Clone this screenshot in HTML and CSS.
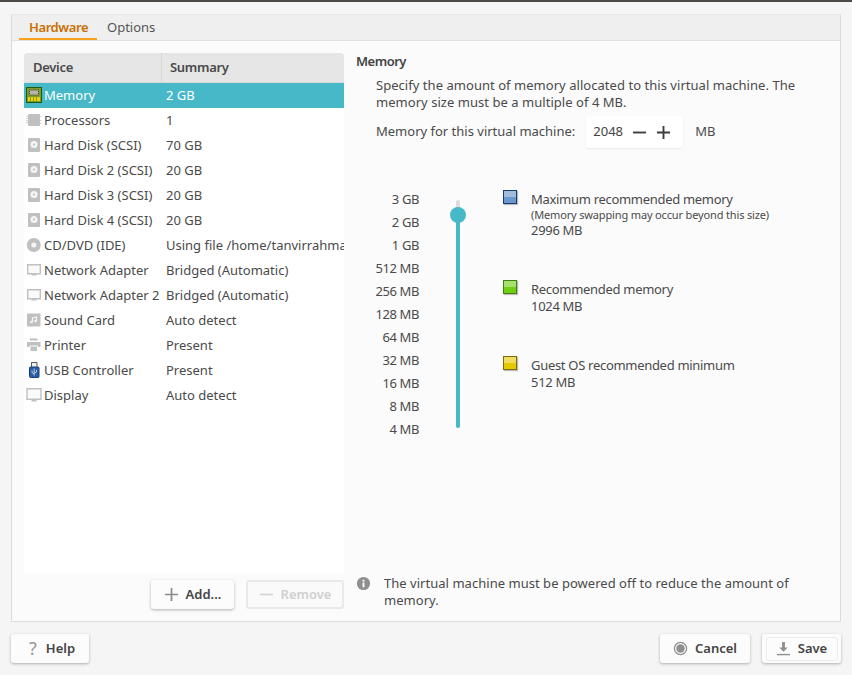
FILE: index.html
```html
<!DOCTYPE html>
<html lang="en">
<head>
    <meta charset="UTF-8">
    <title>Virtual Machine Settings</title>
    <link rel="stylesheet" href="styles.css">
</head>
<body>
    <div class="dialog">
        <div class="panel">
            <div class="tabs">
                <div class="tab tab-active">Hardware</div>
                <div class="tab">Options</div>
            </div>
            <div class="panel-body">
                <div class="devices">
                    <div class="device-list">
                        <div class="device-head">
                            <div class="col-device">Device</div>
                            <div class="col-summary">Summary</div>
                        </div>
                        <div class="device-row selected">
                            <svg class="icon" viewBox="0 0 16 16"><rect x=".5" y=".5" width="15" height="15" fill="#7f9a2a" stroke="#1e5c10"/><rect x="3.5" y="3" width="9" height="5" fill="#b5b5a5" stroke="#3a3a3a" stroke-dasharray="1 1"/><path d="M2 10h12v4H2z" fill="#f0d000"/><path d="M4.5 10v4M7.5 10v4M10.5 10v4" stroke="#7f9a2a"/></svg>
                            <span class="device-name">Memory</span><span class="device-value">2 GB</span>
                        </div>
                        <div class="device-row">
                            <svg class="icon" viewBox="0 0 16 16"><rect x="2" y="2" width="12" height="12" rx="1" fill="#c0c0c0"/><path d="M0 4.5h2M0 6.5h2M0 8.5h2M0 10.5h2M14 4.5h1.5M14 8.5h1.5M14 11.5h1.5" stroke="#d4d4d4"/></svg>
                            <span class="device-name">Processors</span><span class="device-value">1</span>
                        </div>
                        <div class="device-row">
                            <svg class="icon" viewBox="0 0 16 16"><rect x="2" y="1" width="12" height="14" rx="1" fill="#c0c0c0"/><circle cx="8" cy="7.5" r="3.5" fill="#f4f4f4"/><circle cx="8" cy="7.5" r="1" fill="#bbb"/></svg>
                            <span class="device-name">Hard Disk (SCSI)</span><span class="device-value">70 GB</span>
                        </div>
                        <div class="device-row">
                            <svg class="icon" viewBox="0 0 16 16"><rect x="2" y="1" width="12" height="14" rx="1" fill="#c0c0c0"/><circle cx="8" cy="7.5" r="3.5" fill="#f4f4f4"/><circle cx="8" cy="7.5" r="1" fill="#bbb"/></svg>
                            <span class="device-name">Hard Disk 2 (SCSI)</span><span class="device-value">20 GB</span>
                        </div>
                        <div class="device-row">
                            <svg class="icon" viewBox="0 0 16 16"><rect x="2" y="1" width="12" height="14" rx="1" fill="#c0c0c0"/><circle cx="8" cy="7.5" r="3.5" fill="#f4f4f4"/><circle cx="8" cy="7.5" r="1" fill="#bbb"/></svg>
                            <span class="device-name">Hard Disk 3 (SCSI)</span><span class="device-value">20 GB</span>
                        </div>
                        <div class="device-row">
                            <svg class="icon" viewBox="0 0 16 16"><rect x="2" y="1" width="12" height="14" rx="1" fill="#c0c0c0"/><circle cx="8" cy="7.5" r="3.5" fill="#f4f4f4"/><circle cx="8" cy="7.5" r="1" fill="#bbb"/></svg>
                            <span class="device-name">Hard Disk 4 (SCSI)</span><span class="device-value">20 GB</span>
                        </div>
                        <div class="device-row">
                            <svg class="icon" viewBox="0 0 16 16"><circle cx="7.8" cy="8" r="7" fill="#c0c0c0"/><circle cx="7.8" cy="8" r="2.5" fill="#f4f4f4"/></svg>
                            <span class="device-name">CD/DVD (IDE)</span><span class="device-value">Using file /home/tanvirrahman</span>
                        </div>
                        <div class="device-row">
                            <svg class="icon" viewBox="0 0 16 16"><path d="M1.7 2.7h12.600v9H1.700z" fill="#fafafa" stroke="#c0c0c0" stroke-width="1.4"/><path d="M5.5 12h5v1.500h-5z" fill="#c0c0c0"/></svg>
                            <span class="device-name">Network Adapter</span><span class="device-value">Bridged (Automatic)</span>
                        </div>
                        <div class="device-row">
                            <svg class="icon" viewBox="0 0 16 16"><path d="M1.7 2.7h12.600v9H1.700z" fill="#fafafa" stroke="#c0c0c0" stroke-width="1.4"/><path d="M5.5 12h5v1.500h-5z" fill="#c0c0c0"/></svg>
                            <span class="device-name">Network Adapter 2</span><span class="device-value">Bridged (Automatic)</span>
                        </div>
                        <div class="device-row">
                            <svg class="icon" viewBox="0 0 16 16"><rect x="1" y="1.5" width="13.5" height="13" rx="1" fill="#c0c0c0"/><path d="M6.5 10V6l4-1v4" fill="none" stroke="#f4f4f4" stroke-width="1.2"/><circle cx="5.5" cy="10" r="1.3" fill="#f4f4f4"/><circle cx="9.5" cy="9" r="1.3" fill="#f4f4f4"/></svg>
                            <span class="device-name">Sound Card</span><span class="device-value">Auto detect</span>
                        </div>
                        <div class="device-row">
                            <svg class="icon" viewBox="0 0 16 16"><path d="M4 1.500h7.500v2H4zM1 5h13.500v5H1z" fill="#c0c0c0"/><path d="M4 9h7.500v5.500H4z" fill="#c0c0c0" stroke="#fff"/></svg>
                            <span class="device-name">Printer</span><span class="device-value">Present</span>
                        </div>
                        <div class="device-row">
                            <svg class="icon" viewBox="0 0 16 16"><path d="M5.500 .5h5.500v5H5.500z" fill="#eee" stroke="#555"/><rect x="3.5" y="5" width="9.5" height="10.5" rx="1" fill="#2a5fa8" stroke="#1c3f75"/><path d="M8.200 6.500v7M6 8.500v2l2.200 1.500M10.500 8v2l-2.300 1" fill="none" stroke="#bcd"/></svg>
                            <span class="device-name">USB Controller</span><span class="device-value">Present</span>
                        </div>
                        <div class="device-row">
                            <svg class="icon" viewBox="0 0 16 16"><path d="M1 1.700h14v10.600H1z" fill="#fafafa" stroke="#c0c0c0" stroke-width="1.4"/><path d="M5.500 12.500h5v2h-5z" fill="#c0c0c0"/></svg>
                            <span class="device-name">Display</span><span class="device-value">Auto detect</span>
                        </div>
                    </div>
                    <div class="device-actions">
                        <button class="btn btn-add">
                            <svg class="btn-icon" viewBox="0 0 16 16"><path d="M8 1v14M1 8h14" stroke="#8a8a8a" stroke-width="1.8"/></svg>
                            Add...
                        </button>
                        <button class="btn btn-remove" disabled>
                            <svg class="btn-icon" viewBox="0 0 16 16"><path d="M1 8h14" stroke="#d4d4d4" stroke-width="1.8"/></svg>
                            Remove
                        </button>
                    </div>
                </div>

                <div class="memory">
                    <h2>Memory</h2>
                    <div class="memory-inner">
                        <p class="memory-desc">Specify the amount of memory allocated to this virtual machine. The memory size must be a multiple of 4 MB.</p>
                        <div class="memory-input">
                            <span class="input-text">Memory for this virtual machine:</span>
                            <div class="spinner">
                                <span class="spinner-value">2048</span>
                                <svg class="spinner-icon" viewBox="0 0 16 16"><path d="M1 8h14" stroke="#3d3d3d" stroke-width="2"/></svg>
                                <svg class="spinner-icon" viewBox="0 0 16 16"><path d="M8 1v14M1 8h14" stroke="#3d3d3d" stroke-width="2"/></svg>
                            </div>
                            <span class="input-text">MB</span>
                        </div>
                    </div>
                    <div class="slider-area">
                        <div class="scale">
                            <div>3 GB</div><div>2 GB</div><div>1 GB</div><div>512 MB</div><div>256 MB</div><div>128 MB</div><div>64 MB</div><div>32 MB</div><div>16 MB</div><div>8 MB</div><div>4 MB</div>
                        </div>
                        <div class="track">
                            <div class="track-fill"></div>
                            <div class="thumb"></div>
                        </div>
                        <div class="legend">
                            <div class="legend-item legend-gap">
                                <span class="swatch swatch-blue"></span>
                                <div class="legend-text">
                                    <div>Maximum recommended memory</div>
                                    <div class="legend-note">(Memory swapping may occur beyond this size)</div>
                                    <div>2996 MB</div>
                                </div>
                            </div>
                            <div class="legend-item legend-gap">
                                <span class="swatch swatch-green"></span>
                                <div class="legend-text">
                                    <div>Recommended memory</div>
                                    <div>1024 MB</div>
                                </div>
                            </div>
                            <div class="legend-item">
                                <span class="swatch swatch-yellow"></span>
                                <div class="legend-text">
                                    <div>Guest OS recommended minimum</div>
                                    <div>512 MB</div>
                                </div>
                            </div>
                        </div>
                    </div>
                    <div class="notice">
                        <svg class="notice-icon" viewBox="0 0 16 16"><circle cx="8" cy="8" r="7" fill="#8f8f8f"/><rect x="7" y="7" width="2" height="5" fill="#fff"/><rect x="7" y="4" width="2" height="2" fill="#fff"/></svg>
                        <p>The virtual machine must be powered off to reduce the amount of memory.</p>
                    </div>
                </div>
            </div>
        </div>

        <div class="footer">
            <button class="btn btn-help">
                <span class="help-mark">?</span>
                Help
            </button>
            <div class="footer-right">
                <button class="btn btn-cancel">
                    <svg class="btn-icon" viewBox="0 0 16 16"><circle cx="8" cy="8" r="6.5" fill="none" stroke="#8f8f8f" stroke-width="1.4"/><circle cx="8" cy="8" r="4.5" fill="#8f8f8f"/></svg>
                    Cancel
                </button>
                <button class="btn btn-save">
                    <span class="btn-save-inner">
                        <svg class="btn-icon" viewBox="0 0 16 16"><path d="M6.5 1h3v6h3L8 11.500 3.500 7h3z" fill="#8f8f8f"/><path d="M1 14.500h14" stroke="#8f8f8f" stroke-width="1.5"/></svg>
                        Save
                    </span>
                </button>
            </div>
        </div>
    </div>
</body>
</html>
```

FILE: styles.css
```css
html, body {
    margin: 0;
    padding: 0;
    height: 675px;
    overflow: hidden;
}

body {
    background-color: #f5f5f5;
    border-top: 2px solid #4d4a47;
    box-sizing: border-box;
    font-family: "Noto Sans", sans-serif;
    font-size: 13px;
    color: #4a4a4a;
}

.dialog {
    padding: 12px 11px 0;
}

.panel {
    height: 608px;
    box-sizing: border-box;
    background-color: #fbfbfb;
    border: 1px solid #dcdcdc;
    border-top-color: #e8e8e8;
}

.tabs {
    display: flex;
    height: 26px;
    box-sizing: border-box;
    padding-left: 7px;
    background-color: #efefef;
    border-bottom: 1px solid #e2e2e2;
}

.tab {
    height: 25px;
    box-sizing: border-box;
    padding: 0 10px;
    line-height: 24px;
    color: #555;
}

.tab-active {
    width: 78px;
    font-weight: 600;
    letter-spacing: -0.4px;
    color: #c87000;
    border-bottom: 2px solid #f9a11b;
}

.panel-body {
    display: flex;
    gap: 12px;
    padding: 12px 12px 0;
}

.devices {
    width: 320px;
    flex-shrink: 0;
}

.device-list {
    height: 520px;
    background-color: #fff;
}

.device-head {
    display: flex;
    height: 30px;
    line-height: 28px;
    box-sizing: border-box;
    background-color: #e6e6e6;
    border-bottom: 1px solid #dadada;
    border-radius: 3px 3px 0 0;
    font-weight: 600;
    letter-spacing: -0.3px;
}

.col-device {
    width: 128px;
    padding-left: 9px;
    border-right: 1px solid #d6d6d6;
}

.col-summary {
    padding-left: 8px;
}

.device-row {
    display: flex;
    align-items: center;
    height: 25px;
    box-sizing: border-box;
    padding: 0 0 2px 2px;
    white-space: nowrap;
    overflow: hidden;
}

.device-row.selected {
    background-color: #47b8c8;
    color: #fff;
}

.icon {
    width: 16px;
    height: 16px;
    flex-shrink: 0;
}

.device-name {
    width: 122px;
    margin-left: 2px;
    flex-shrink: 0;
}

.device-actions {
    display: flex;
    justify-content: flex-end;
    gap: 12px;
    margin-top: 7px;
}

.btn {
    display: inline-flex;
    align-items: center;
    justify-content: center;
    gap: 7px;
    height: 29px;
    padding: 0 0 2px;
    font-family: inherit;
    font-size: 13px;
    font-weight: 600;
    color: #444;
    background-color: #fcfcfc;
    border: none;
    border-radius: 3px;
    box-shadow: 0 1px 3px rgba(0, 0, 0, 0.3);
}

.btn-icon {
    width: 15px;
    height: 15px;
    margin-top: 2px;
    flex-shrink: 0;
}

.btn-add {
    width: 83px;
}

.btn-remove {
    width: 98px;
    color: #cfcfcf;
    background-color: #fafafa;
    border: 2px solid #e9e9e9;
    box-shadow: none;
}

.memory {
    flex: 1;
    position: relative;
    height: 556px;
}

.memory h2 {
    margin: 0;
    font-size: 13px;
    font-weight: 600;
    line-height: 17px;
    letter-spacing: -0.5px;
    color: #444;
}

.memory-inner {
    padding-left: 20px;
}

.memory-desc {
    margin: 7px 0 0;
    width: 440px;
    line-height: 17px;
    letter-spacing: 0.04px;
}

.memory-input {
    display: flex;
    align-items: center;
    margin-top: 5px;
}

.input-text {
    margin-bottom: 2px;
}

.spinner {
    display: flex;
    align-items: center;
    width: 97px;
    height: 32px;
    box-sizing: border-box;
    margin: 0 12px 0 11px;
    padding-left: 7px;
    background-color: #fff;
    border-radius: 3px;
    box-shadow: 0 1px 2px rgba(0, 0, 0, 0.08);
    color: #444;
}

.spinner-value {
    width: 39px;
    margin-bottom: 2px;
}

.spinner-icon {
    width: 15px;
    height: 15px;
    margin-right: 9px;
}

.slider-area {
    display: flex;
    margin-top: 40px;
}

.scale {
    width: 63px;
    text-align: right;
    line-height: 23px;
    letter-spacing: -0.4px;
}

.track {
    position: relative;
    width: 4px;
    height: 228px;
    margin: 12px 0 0 37px;
    background-color: #dcdcdc;
    border-radius: 2px;
}

.track-fill {
    position: absolute;
    left: 0;
    right: 0;
    top: 15px;
    bottom: 0;
    background-color: #47b8c8;
    border-radius: 2px;
}

.thumb {
    position: absolute;
    left: -6px;
    top: 7px;
    width: 16px;
    height: 16px;
    border-radius: 50%;
    background-color: #47b8c8;
}

.legend {
    margin: 2px 0 0 43px;
    line-height: 17px;
    letter-spacing: -0.3px;
}

.legend-item {
    display: flex;
    gap: 14px;
}

.legend-gap {
    margin-bottom: 41px;
}

.legend-text {
    padding-top: 1px;
}

.legend-note {
    font-size: 11px;
    line-height: 14px;
    letter-spacing: -0.15px;
}

.swatch {
    width: 14px;
    height: 14px;
    box-sizing: border-box;
    border: 1px solid;
    box-shadow: 1px 1px 1px rgba(0, 0, 0, 0.25);
}

.swatch-blue {
    border-color: #1a3a6e;
    background: linear-gradient(#a2bcdc 50%, #6b97cf 50%);
}

.swatch-green {
    border-color: #3f7f12;
    background: linear-gradient(#a8e070 50%, #6ed010 50%);
}

.swatch-yellow {
    border-color: #7a6a10;
    background: linear-gradient(#f0dc60 50%, #e4c800 50%);
}

.notice {
    position: absolute;
    left: 0;
    right: 0;
    top: 522px;
    display: flex;
    gap: 13px;
}

.notice-icon {
    width: 15px;
    height: 15px;
    flex-shrink: 0;
    margin-top: 1px;
}

.notice p {
    margin: 0;
    width: 420px;
    line-height: 17px;
    letter-spacing: 0.03px;
}

.footer {
    display: flex;
    justify-content: space-between;
    margin-top: 12px;
}

.footer-right {
    display: flex;
    gap: 12px;
}

.btn-help {
    width: 78px;
    justify-content: flex-start;
    gap: 9px;
    padding-left: 18px;
}

.help-mark {
    font-size: 18px;
    line-height: 18px;
    font-weight: 400;
    color: #999;
}

.btn-cancel {
    width: 90px;
}

.btn-save {
    width: 79px;
}

.btn-save-inner {
    display: inline-flex;
    align-items: center;
    justify-content: center;
    gap: 7px;
    width: 72px;
    height: 24px;
    margin-top: 2px;
    padding-bottom: 2px;
    border: 1px solid #ececec;
    border-radius: 3px;
    box-sizing: border-box;
}
```
